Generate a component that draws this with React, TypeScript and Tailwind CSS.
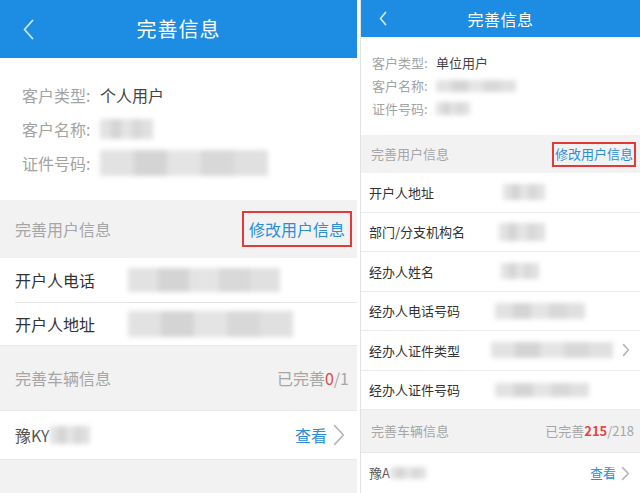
import React from "react";

const FONT = { fontFamily: '"Noto Sans CJK SC", "Noto Sans", sans-serif' };

function Blur({ w, h, tone = "mid" }: { w: number; h: number; tone?: "light" | "mid" }) {
  const base = tone === "light" ? "bg-[#e6e6e6]" : "bg-[#dadada]";
  return (
    <div className={`flex blur-[2.5px] ${base}`} style={{ width: w, height: h }}>
      <div className="flex-1 bg-[#e2e2e2]" />
      <div className="flex-1 bg-[#d4d4d4]" />
      <div className="flex-1 bg-[#e4e4e4]" />
      <div className="flex-1 bg-[#d8d8d8]" />
      <div className="flex-1 bg-[#e0e0e0]" />
    </div>
  );
}

function Chevron({ w, h, color = "#b5b5b5", sw = 1.6 }: { w: number; h: number; color?: string; sw?: number }) {
  return (
    <svg width={w} height={h} viewBox={`0 0 ${w} ${h}`} fill="none">
      <polyline
        points={`${sw},${sw} ${w - sw},${h / 2} ${sw},${h - sw}`}
        stroke={color}
        strokeWidth={sw}
        strokeLinecap="round"
        strokeLinejoin="round"
      />
    </svg>
  );
}

function Back({ w, h }: { w: number; h: number }) {
  return (
    <svg width={w} height={h} viewBox={`0 0 ${w} ${h}`} fill="none">
      <polyline
        points={`${w - 1.5},1.5 1.5,${h / 2} ${w - 1.5},${h - 1.5}`}
        stroke="#cfe6fa"
        strokeWidth={1.8}
        strokeLinecap="round"
        strokeLinejoin="round"
      />
    </svg>
  );
}

function LeftScreen() {
  return (
    <div className="w-[357px] h-[493px] overflow-hidden bg-[#f2f2f2] flex flex-col">
      {/* header */}
      <div className="h-[58px] bg-[#1d8de3] flex items-center shrink-0">
        <div className="w-[60px] pl-[23px] flex items-center">
          <Back w={11} h={21} />
        </div>
        <div className="flex-1 text-center text-white text-[20px] tracking-[1px]">完善信息</div>
        <div className="w-[60px]" />
      </div>

      {/* customer info */}
      <div className="bg-white pt-[20px] pb-[20px] pl-[22px] text-[16px]">
        <div className="h-[34px] flex items-center">
          <span className="text-[#a3a3a3] w-[78px]">客户类型:</span>
          <span className="text-[#444]">个人用户</span>
        </div>
        <div className="h-[34px] flex items-center">
          <span className="text-[#a3a3a3] w-[78px]">客户名称:</span>
          <Blur w={53} h={20} />
        </div>
        <div className="h-[34px] flex items-center">
          <span className="text-[#a3a3a3] w-[78px]">证件号码:</span>
          <Blur w={168} h={26} tone="light" />
        </div>
      </div>

      {/* user info header */}
      <div className="h-[58px] flex items-center justify-between pl-[15px] pr-[5px]">
        <span className="text-[16px] text-[#a6a6a6]">完善用户信息</span>
        <span className="border-2 border-[#e03a3a] h-[36px] px-[5px] flex items-center text-[16px] text-[#2a8fd8]">
          修改用户信息
        </span>
      </div>

      <div className="bg-white">
        <div className="h-[44px] flex items-center pl-[15px]">
          <span className="w-[113px] text-[16px] text-[#333]">开户人电话</span>
          <Blur w={152} h={24} tone="light" />
        </div>
        <div className="ml-[15px] border-t border-[#e6e6e6] h-[43px] flex items-center">
          <span className="w-[113px] text-[16px] text-[#333]">开户人地址</span>
          <Blur w={165} h={26} />
        </div>
      </div>

      {/* vehicle header */}
      <div className="h-[65px] flex items-center justify-between pl-[15px] pr-[8px] border-t border-[#e8e8e8]">
        <span className="text-[16px] text-[#a6a6a6]">完善车辆信息</span>
        <span className="text-[16px] text-[#a6a6a6]">
          已完善<span className="text-[#e6454a]">0</span>/1
        </span>
      </div>

      <div className="bg-white h-[50px] flex items-center justify-between pl-[15px] pr-[12px] border-t border-[#e8e8e8] border-b">
        <div className="flex items-center">
          <span className="text-[16px] text-[#555]">豫KY</span>
          <Blur w={40} h={18} />
        </div>
        <div className="flex items-center gap-[6px]">
          <span className="text-[16px] text-[#2a8fd8]">查看</span>
          <Chevron w={12} h={22} />
        </div>
      </div>
    </div>
  );
}

const rightRows: { label: string; w: number; h: number; arrow?: boolean; off: number }[] = [
  { label: "开户人地址", w: 42, h: 16, off: 502 },
  { label: "部门/分支机构名", w: 46, h: 18, off: 498 },
  { label: "经办人姓名", w: 38, h: 16, off: 500 },
  { label: "经办人电话号码", w: 90, h: 16, off: 494 },
  { label: "经办人证件类型", w: 122, h: 16, arrow: true, off: 490 },
  { label: "经办人证件号码", w: 94, h: 14, off: 494 },
];

function RightScreen() {
  return (
    <div className="w-[280px] h-[493px] overflow-hidden bg-[#f2f2f2] flex flex-col border-l border-[#e2e2e2]">
      <div className="h-[37px] bg-[#1d8de3] flex items-center shrink-0">
        <div className="w-[50px] pl-[18px] flex items-center">
          <Back w={8} h={15} />
        </div>
        <div className="flex-1 text-center text-white text-[16px] tracking-[0.5px]">完善信息</div>
        <div className="w-[50px]" />
      </div>

      <div className="bg-white pt-[14px] pb-[15px] pl-[11px] text-[13px]">
        <div className="h-[23px] flex items-center">
          <span className="text-[#a3a3a3] w-[64px]">客户类型:</span>
          <span className="text-[#444]">单位用户</span>
        </div>
        <div className="h-[23px] flex items-center">
          <span className="text-[#a3a3a3] w-[64px]">客户名称:</span>
          <Blur w={80} h={12} />
        </div>
        <div className="h-[23px] flex items-center">
          <span className="text-[#a3a3a3] w-[64px]">证件号码:</span>
          <Blur w={34} h={13} tone="light" />
        </div>
      </div>

      <div className="h-[38px] flex items-center justify-between pl-[10px] pr-[4px]">
        <span className="text-[13px] text-[#a6a6a6]">完善用户信息</span>
        <span className="border-2 border-[#e03a3a] h-[25px] px-[1px] flex items-center text-[13px] text-[#2a8fd8]">
          修改用户信息
        </span>
      </div>

      <div className="bg-white">
        {rightRows.map((r) => (
          <div key={r.label} className="h-[39.5px] border-b border-[#ebebeb] flex items-center pl-[8px] pr-[10px]">
            <span className="text-[13px] text-[#333]" style={{ width: r.off - 368 }}>
              {r.label}
            </span>
            <Blur w={r.w} h={r.h} />
            <div className="flex-1" />
            {r.arrow && <Chevron w={8} h={14} />}
          </div>
        ))}
      </div>

      <div className="h-[42px] flex items-center justify-between pl-[10px] pr-[6px]">
        <span className="text-[13px] text-[#a6a6a6]">完善车辆信息</span>
        <span className="text-[13px] text-[#a6a6a6]">
          已完善<span className="text-[#e6454a] font-bold">215</span>/218
        </span>
      </div>

      <div className="bg-white h-[41px] flex items-center justify-between pl-[8px] pr-[10px] border-t border-[#e8e8e8]">
        <div className="flex items-center">
          <span className="text-[13px] text-[#555]">豫A</span>
          <Blur w={36} h={12} />
        </div>
        <div className="flex items-center gap-[5px]">
          <span className="text-[13px] text-[#2a8fd8]">查看</span>
          <Chevron w={9} h={15} />
        </div>
      </div>
    </div>
  );
}

export default function App() {
  return (
    <div className="w-[640px] h-[493px] bg-white flex gap-[3px]" style={FONT}>
      <LeftScreen />
      <RightScreen />
    </div>
  );
}
